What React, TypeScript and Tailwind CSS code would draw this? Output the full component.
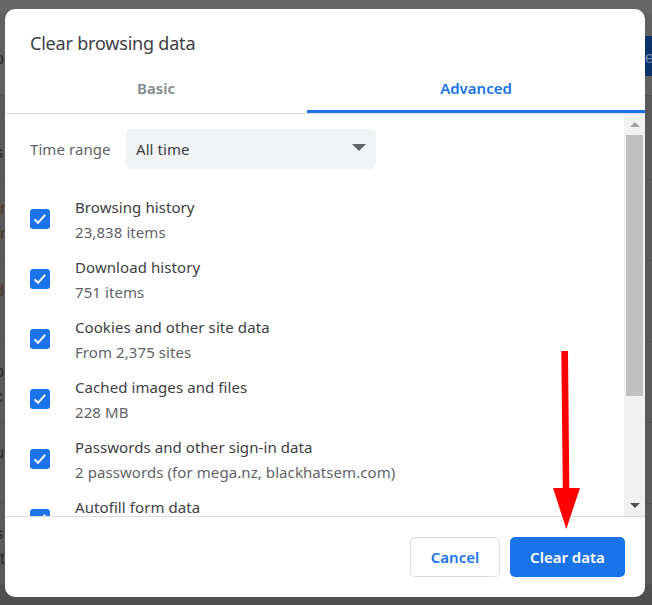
const FONT = "font-['Noto_Sans','Open_Sans',sans-serif]";

const ROWS = [
  { title: "Browsing history", sub: "23,838 items" },
  { title: "Download history", sub: "751 items" },
  { title: "Cookies and other site data", sub: "From 2,375 sites" },
  { title: "Cached images and files", sub: "228 MB" },
  { title: "Passwords and other sign-in data", sub: "2 passwords (for mega.nz, blackhatsem.com)" },
  { title: "Autofill form data" },
];

// page behind the dialog, only the edges show
const BACK_ROWS = [
  { h: "h-[84px] pt-[44px]", a: "s", b: "" },
  { h: "h-[81px] pt-[16px]", a: "r", b: "r", brown: true },
  { h: "h-[81px] pt-[17px]", a: "d", b: "", brown: true },
  { h: "h-[81px] pt-[17px]", a: "o", b: "c" },
  { h: "h-[81px] pt-[17px]", a: "u", b: "" },
  { h: "h-[81px] pt-[17px]", a: "s", b: "t" },
];

function BackGlyph({ c }: { c: string }) {
  // narrow letters stay whole in the strip, wide ones are cut by the dialog
  return <span className={c === "r" || c === "t" ? "ml-0" : "-ml-[5px]"}>{c}</span>;
}

function Backdrop() {
  return (
    <div className="flex flex-col h-full text-[16px] leading-[25px] text-[#24282c] font-['Liberation_Sans',sans-serif]">
      <div className="h-[15px] bg-[#676767] border-b border-[#5e5e5e]" />
      <div className="h-[81px] bg-[#616161] border-b border-[#525252] flex items-center justify-between">
        <span className="-ml-[5px] mt-[6px]">o</span>
        <div className="w-[7px] h-[40px] mt-[2px] bg-[#0b3269] text-[#6f87a8] leading-[44px] overflow-hidden">e</div>
      </div>
      {BACK_ROWS.map((r, i) => (
        <div key={i} className={`${r.h} bg-[#5a5a5a] border-b border-[#525252] flex flex-col ${r.brown ? "text-[#4a3526]" : ""}`}>
          <BackGlyph c={r.a} />
          {r.b && <BackGlyph c={r.b} />}
        </div>
      ))}
      <div className="flex-1 bg-[#4f4f4f]" />
    </div>
  );
}

function Check() {
  return (
    <div className="w-[20px] h-[20px] shrink-0 rounded-[3px] bg-[#1a73e8] flex items-center justify-center">
      <svg width="20" height="20" viewBox="0 0 20 20" fill="none">
        <path d="M4.6 10.4 L8 13.8 L15.2 5.8" stroke="#fff" strokeWidth="2" />
      </svg>
    </div>
  );
}

function Row({ title, sub }: { title: string; sub?: string }) {
  return (
    <div className="h-[60px] flex items-center shrink-0">
      <Check />
      <div className="ml-[25px] h-[50px] flex flex-col pt-[1px]">
        <div className="h-[25px] leading-[25px] text-[#3c4043]">{title}</div>
        {sub && <div className="h-[25px] leading-[25px] text-[#5f6368]">{sub}</div>}
      </div>
    </div>
  );
}

function Scrollbar() {
  return (
    <div className="w-[21px] shrink-0 bg-[#f1f1f1] flex flex-col items-center px-[2px]">
      <div className="h-[21px] flex items-center justify-center">
        <div className="w-0 h-0 border-x-[5px] border-x-transparent border-b-[5px] border-b-[#a3a3a3]" />
      </div>
      <div className="w-[17px] h-[261px] bg-[#c1c1c1]" />
      <div className="flex-1 flex items-end pb-[8px]">
        <div className="w-0 h-0 border-x-[5px] border-x-transparent border-t-[5px] border-t-[#505050]" />
      </div>
    </div>
  );
}

export default function App() {
  return (
    <div className={`relative w-[652px] h-[605px] overflow-hidden ${FONT}`}>
      <Backdrop />
      <div className="absolute left-[5px] top-[9px] w-[640px] h-[588px] bg-white rounded-[10px] overflow-hidden flex flex-col text-[15px] tracking-[0.08px]">
        <div className="h-[34px] mt-[20px] ml-[25px] text-[#3c4043] text-[18px] leading-[28px] tracking-[-0.2px]">Clear browsing data</div>
        <div className="h-[51px] flex border-b border-[#dadce0] font-semibold tracking-normal">
          <div className="w-[302px] h-[50px] flex items-center justify-center text-[#80868b]">Basic</div>
          <div className="flex-1 h-[50px] flex items-center justify-center text-[#1a73e8] border-b-[3px] border-[#1a73e8] pt-[3px]">Advanced</div>
        </div>
        <div className="h-[402px] flex overflow-hidden">
          <div className="flex-1 pl-[25px] overflow-hidden">
            <div className="flex items-center h-[40px] mt-[15px] mb-[20px]">
              <div className="w-[96px] text-[#5f6368]">Time range</div>
              <div className="w-[250px] h-[40px] rounded-[5px] bg-[#f1f3f4] flex items-center justify-between pl-[10px] pr-[10px] text-[#3c4043]">
                <span>All time</span>
                <div className="w-0 h-0 border-x-[7px] border-x-transparent border-t-[7px] border-t-[#5f6368] mb-[3px]" />
              </div>
            </div>
            {ROWS.map(r => <Row key={r.title} title={r.title} sub={r.sub} />)}
          </div>
          <Scrollbar />
        </div>
        <div className="flex-1 border-t border-[#dadce0] flex justify-end items-start pt-[20px] pr-[20px] gap-[10px] font-semibold tracking-normal">
          <button className="w-[90px] h-[40px] pt-[1px] rounded-[5px] border border-[#dadce0] bg-white text-[#1a73e8]">Cancel</button>
          <button className="w-[115px] h-[40px] pt-[1px] rounded-[5px] bg-[#1a73e8] text-white">Clear data</button>
        </div>
      </div>
      <svg className="absolute left-[550px] top-[348px]" width="34" height="184" viewBox="550 348 34 184">
        <path d="M561.3 351 L568 351 L569.3 488 L580 488 L566.3 529 L553 488 L562.8 488 Z" fill="#ff0000" />
      </svg>
    </div>
  );
}
